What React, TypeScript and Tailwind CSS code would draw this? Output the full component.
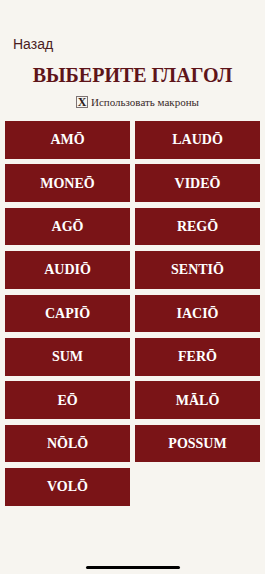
import React, { useState } from 'react';

const verbs = ['AMŌ', 'LAUDŌ', 'MONEŌ', 'VIDEŌ', 'AGŌ', 'REGŌ', 'AUDIŌ', 'SENTIŌ', 'CAPIŌ', 'IACIŌ', 'SUM', 'FERŌ', 'EŌ', 'MĀLŌ', 'NŌLŌ', 'POSSUM', 'VOLŌ'];

export default function App() {
  const [macrons, setMacrons] = useState(true);

  return (
    <div className="min-h-[574px] bg-[#f7f5f0] flex flex-col relative">
      <div className="h-[36px]" />
      <button className="self-start ml-[13px] text-[14px] text-[#4a1c1e] font-['Liberation_Sans',sans-serif] leading-[16px]">Назад</button>
      <h1 className="mt-[11px] text-center text-[20px] font-bold text-[#5e1419] font-['Liberation_Serif',serif] leading-[24px]">
        ВЫБЕРИТЕ ГЛАГОЛ
      </h1>
      <div className="mt-[8px] pl-[10px] flex items-center justify-center gap-[3px]">
        <button
          onClick={() => setMacrons(!macrons)}
          className="w-[12px] h-[12px] border-[1.5px] border-[#7d7373] flex items-center justify-center text-[12px] font-bold text-[#2a1a1a] font-['Liberation_Serif',serif] leading-none"
        >
          {macrons ? 'X' : ''}
        </button>
        <span className="text-[11px] text-[#3a2a2a] font-['Liberation_Serif',serif] leading-[14px]">Использовать макроны</span>
      </div>
      <div className="mt-[12px] px-[5px] grid grid-cols-2 gap-x-[5px] gap-y-[5.7px]">
        {verbs.map((v) => (
          <button
            key={v}
            className="h-[37.7px] bg-[#7a1417] text-white text-[14px] font-bold font-['Liberation_Serif',serif] flex items-center justify-center"
          >
            {v}
          </button>
        ))}
      </div>
      <div className="absolute bottom-[5px] left-1/2 -translate-x-1/2 w-[94px] h-[3px] rounded-full bg-black" />
    </div>
  );
}
